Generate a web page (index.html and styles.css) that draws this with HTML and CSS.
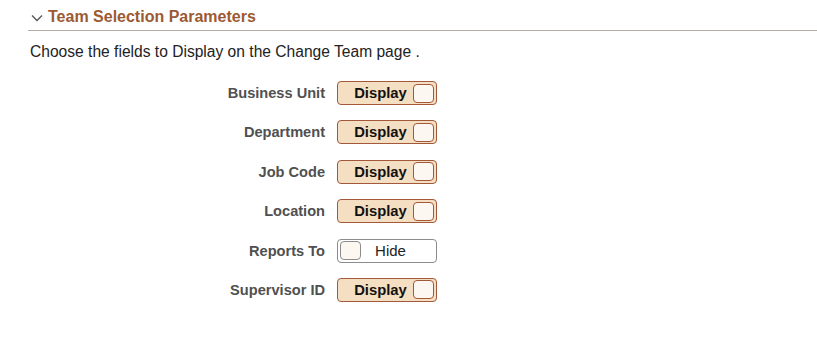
FILE: index.html
```html
<!DOCTYPE html>
<html>
<head>
    <meta charset="utf-8">
    <title>Team Selection Parameters</title>
    <link rel="stylesheet" href="styles.css">
</head>
<body>
    <div class="section">
        <div class="section-header">
            <svg class="chevron" width="12" height="8" viewBox="0 0 12 8">
                <path d="M1 1.5 L6 6.5 L11 1.5" fill="none" stroke="#555" stroke-width="1.3"/>
            </svg>
            <h2>Team Selection Parameters</h2>
        </div>

        <p class="intro">Choose the fields to Display on the Change Team page .</p>

        <div class="fields">
            <label>Business Unit</label>
            <div class="toggle on"><span class="toggle-text">Display</span><span class="knob"></span></div>

            <label>Department</label>
            <div class="toggle on"><span class="toggle-text">Display</span><span class="knob"></span></div>

            <label>Job Code</label>
            <div class="toggle on"><span class="toggle-text">Display</span><span class="knob"></span></div>

            <label>Location</label>
            <div class="toggle on"><span class="toggle-text">Display</span><span class="knob"></span></div>

            <label>Reports To</label>
            <div class="toggle off"><span class="knob"></span><span class="toggle-text">Hide</span></div>

            <label>Supervisor ID</label>
            <div class="toggle on"><span class="toggle-text">Display</span><span class="knob"></span></div>
        </div>
    </div>
</body>
</html>
```

FILE: styles.css
```css
body {
    margin: 0;
    font-family: Arial, "Liberation Sans", sans-serif;
    color: #222;
    background: #fff;
}

.section {
    padding: 0 0 0 28px;
}

.section-header {
    display: flex;
    align-items: center;
    gap: 5px;
    height: 31px;
    padding: 4px 0 0 3px;
    border-bottom: 1px solid #b5aca3;
    box-sizing: border-box;
}

.chevron {
    margin-top: 2px;
}

.section-header h2 {
    margin: 0;
    font-size: 16px;
    font-weight: bold;
    color: #9c5a33;
}

.intro {
    margin: 12px 0 0 2px;
    font-size: 15.6px;
    line-height: 18px;
    color: #222;
}

.fields {
    display: grid;
    grid-template-columns: 297px 100px;
    grid-auto-rows: 24px;
    column-gap: 12px;
    row-gap: 15.4px;
    margin-top: 20px;
    align-items: center;
}

.fields label {
    text-align: right;
    font-size: 14.6px;
    font-weight: bold;
    color: #505050;
}

.toggle {
    box-sizing: border-box;
    height: 24px;
    display: flex;
    align-items: center;
    border-radius: 4px;
    font-size: 14.8px;
    padding: 0 2px;
}

.toggle.on {
    background: #f5dfc2;
    border: 1px solid #a3583a;
    font-weight: bold;
    color: #111;
}

.toggle.off {
    background: #fff;
    border: 1px solid #8c8c8c;
    color: #222;
    font-size: 15px;
}

.toggle-text {
    flex: 1;
    text-align: center;
}

.toggle.on .toggle-text {
    padding-left: 8px;
}

.toggle.off .toggle-text {
    padding-right: 14px;
}

.knob {
    box-sizing: border-box;
    width: 21px;
    height: 19px;
    border-radius: 4px;
    background: #fdf7f1;
}

.toggle.on .knob {
    border: 1px solid #a3583a;
}

.toggle.off .knob {
    border: 1px solid #8c8c8c;
}
```
